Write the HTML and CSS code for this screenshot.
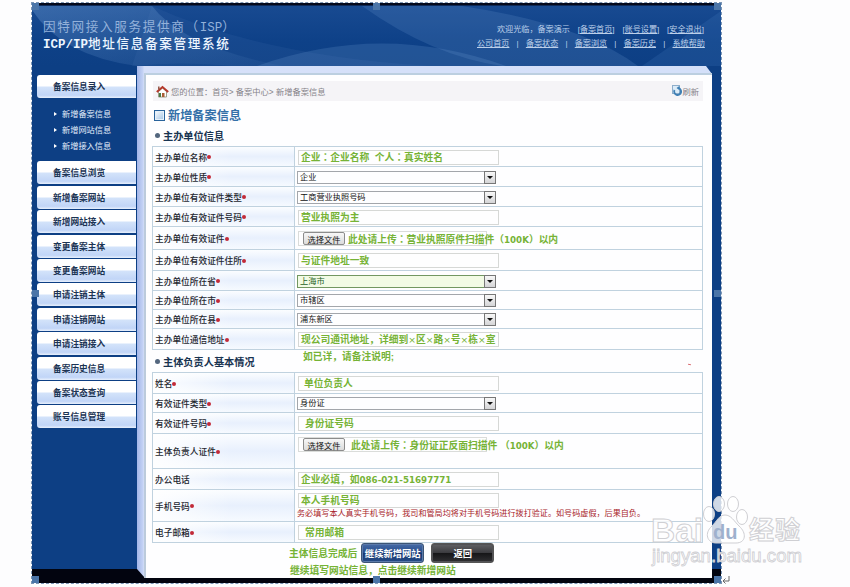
FILE: index.html
```html
<!DOCTYPE html>
<html lang="zh-CN">
<head>
<meta charset="utf-8">
<title>ICP/IP地址信息备案管理系统</title>
<link rel="stylesheet" href="styles.css">
</head>
<body>
<div class="app">
  <header class="header">
    <svg class="rays" width="689" height="60" viewBox="0 0 689 60" aria-hidden="true">
      <defs>
        <linearGradient id="ray" x1="0" y1="0" x2="1" y2="1"><stop offset="0" stop-color="#6d9bd2" stop-opacity=".38"/><stop offset="1" stop-color="#6d9bd2" stop-opacity=".06"/></linearGradient>
      </defs>
      <path d="M0 4Q30 50 105 60H250Q150 40 120 0H0Z" fill="url(#ray)"/>
      <path d="M120 0Q230 50 400 60H200Q150 55 100 60Z" fill="#5e8cc6" opacity=".1"/>
      <path d="M430 0Q550 18 606 60H470Q400 50 330 0Z" fill="#6e9bd2" opacity=".2"/>
      <path d="M225 60Q350 15 474 60Z" fill="#6e9bd2" opacity=".22"/>
      <path d="M689 5L610 60H689Z" fill="#4e86c6" opacity=".18"/>
    </svg>
    <div class="brand">
      <div class="brand-top">因特网接入服务提供商（<span>ISP</span>）</div>
      <div class="brand-main"><span>ICP/IP</span>地址信息备案管理系统</div>
    </div>
    <div class="account">
      <div class="links"><span>欢迎光临，备案演示</span><span>[<a>备案首页</a>]</span><span>[<a>账号设置</a>]</span><span>[<a>安全退出</a>]</span></div>
      <div class="links second"><a>公司首页</a><i>|</i><a>备案状态</a><i>|</i><a>备案浏览</a><i>|</i><a>备案历史</a><i>|</i><a>系统帮助</a></div>
    </div>
  </header>
  <div class="body">
    <nav class="side">
      <div class="item">备案信息录入</div>
      <ul class="sub"><li>新增备案信息</li><li>新增网站信息</li><li>新增接入信息</li></ul>
      <div class="items">
        <div class="item">备案信息浏览</div>
        <div class="item">新增备案网站</div>
        <div class="item">新增网站接入</div>
        <div class="item">变更备案主体</div>
        <div class="item">变更备案网站</div>
        <div class="item">申请注销主体</div>
        <div class="item">申请注销网站</div>
        <div class="item">申请注销接入</div>
        <div class="item">备案历史信息</div>
        <div class="item">备案状态查询</div>
        <div class="item">账号信息管理</div>
      </div>
    </nav>
    <div class="frame">
      <main class="panel">
        <div class="crumbs">
          <svg width="13" height="13" viewBox="0 0 13 13"><path d="M2.5 6.5V12h8V6.5L6.5 3Z" fill="#fff" stroke="#8b8a72" stroke-width=".8"/><path d="M.8 7L6.5 2L12.2 7" fill="none" stroke="#b33a2d" stroke-width="2"/><path d="M2.8 1.5v3" stroke="#8c4a38" stroke-width="1.4"/><path d="M3 8h2v4H3z" fill="#4a7a48"/><path d="M6 8h2.5v4H6z" fill="#a85c34"/></svg>
          <span>您的位置：首页&gt; 备案中心&gt; 新增备案信息</span>
          <div class="refresh"><svg width="11" height="12" viewBox="0 0 11 12"><rect x=".5" y=".5" width="7" height="8" fill="#dcecf8" stroke="#8eaecb"/><path d="M2.5 5A3.5 3.5 0 1 0 6 3M8.7 5.2A3.5 3.5 0 0 1 5 10" fill="none" stroke="#3f7fb4" stroke-width="1.8"/><path d="M4.5 3L7.3 1v4Z" fill="#3f7fb4"/></svg>刷新</div>
        </div>
        <h1><i></i>新增备案信息</h1>
        <h2>主办单位信息</h2>
        <div class="form">
          <div class="row h20"><label>主办单位名称<b></b></label><div class="cell"><div class="input">企业<s lang="zh-TW">：</s>企业名称&nbsp; 个人<s lang="zh-TW">：</s>真实姓名</div></div></div>
          <div class="row h20"><label>主办单位性质<b></b></label><div class="cell"><div class="select">企业</div></div></div>
          <div class="row h20"><label>主办单位有效证件类型<b></b></label><div class="cell"><div class="select">工商营业执照号码</div></div></div>
          <div class="row h20"><label>主办单位有效证件号码<b></b></label><div class="cell"><div class="input">营业执照为主</div></div></div>
          <div class="row h23"><label>主办单位有效证件<b></b></label><div class="cell"><div class="file"><button>选择文件</button><span>此处请上传<s lang="zh-TW">：</s>营业执照原件扫描件<s lang="zh-TW">（</s><em>100K</em><s lang="zh-TW">）</s>以内</span></div></div></div>
          <div class="row h21"><label>主办单位有效证件住所<b></b></label><div class="cell"><div class="input">与证件地址一致</div></div></div>
          <div class="row h20"><label>主办单位所在省<b></b></label><div class="cell"><div class="select active">上海市</div></div></div>
          <div class="row h19"><label>主办单位所在市<b></b></label><div class="cell"><div class="select">市辖区</div></div></div>
          <div class="row h19"><label>主办单位所在县<b></b></label><div class="cell"><div class="select">浦东新区</div></div></div>
          <div class="row h21"><label>主办单位通信地址<b></b></label><div class="cell"><div class="input">现公司通讯地址，详细到<u>×</u>区<u>×</u>路<u>×</u>号<u>×</u>栋<u>×</u>室</div></div></div>
        </div>
        <div class="between"><h2>主体负责人基本情况</h2><span>如已详，请备注说明;</span><i></i></div>
        <div class="form">
          <div class="row h21"><label>姓名<b></b></label><div class="cell"><div class="input in2">单位负责人</div></div></div>
          <div class="row h19"><label>有效证件类型<b></b></label><div class="cell"><div class="select">身份证</div></div></div>
          <div class="row h21"><label>有效证件号码<b></b></label><div class="cell"><div class="input in3">身份证号码</div></div></div>
          <div class="row h35"><label>主体负责人证件<b></b></label><div class="cell top"><div class="file gap"><button>选择文件</button><span>此处请上传<s lang="zh-TW">：</s>身份证正反面扫描件 <s lang="zh-TW">（</s><em>100K</em><s lang="zh-TW">）</s>以内</span></div></div></div>
          <div class="row h21"><label>办公电话</label><div class="cell"><div class="input">企业必填，如<em>086-021-51697771</em></div></div></div>
          <div class="row h32"><label>手机号码<b></b></label><div class="cell stack"><div class="input">本人手机号码</div><p>务必填写本人真实手机号码，我司和管局均将对手机号码进行拨打验证。如号码虚假，后果自负。</p></div></div>
          <div class="row h21"><label>电子邮箱<b></b></label><div class="cell"><div class="input in3">常用邮箱</div></div></div>
        </div>
        <div class="actions"><span>主体信息完成后</span><button class="go">继续新增网站</button><button class="back">返回</button></div>
        <div class="tip">继续填写网站信息，点击继续新增网站</div>
      </main>
    </div>
  </div>
  <div class="outline"></div>
  <i class="handle nw"></i><i class="handle n"></i><i class="handle ne"></i><i class="handle w"></i><i class="handle e"></i><i class="handle s"></i><i class="handle se"></i><i class="handle sw"></i>
</div>
<svg class="return" width="9" height="8" viewBox="0 0 9 8"><path d="M7 0v5H1M3.5 2.500L1 5l2.500 2.500" fill="none" stroke="#666"/></svg>
<svg class="watermark" width="200" height="90" viewBox="640 490 200 90">
  <g class="wm">
    <text x="651" y="542" font-size="34" textLength="52" lengthAdjust="spacingAndGlyphs">Bai</text>
    <ellipse cx="709" cy="514" rx="5.500" ry="7.500"/><ellipse cx="719" cy="504" rx="5.500" ry="7.500"/><ellipse cx="733" cy="504" rx="5.500" ry="7.500"/><ellipse cx="742" cy="517" rx="5.500" ry="7.500"/>
    <path d="M725 515C719 515 717 521 712 526C704 533 707 543 716 543H736C746 543 747 533 739 526C734 521 731 515 725 515Z"/>
    <text x="749" y="539" font-size="25" class="cn" textLength="51">经验</text>
    <text x="652" y="562" font-size="18" class="url" textLength="150" lengthAdjust="spacingAndGlyphs">jingyan.baidu.com</text>
  </g>
  <text x="713" y="539" class="du">du</text>
</svg>
</body>
</html>
```
FILE: styles.css
```css
* { box-sizing: border-box; }
body {
  margin: 0;
  width: 850px;
  height: 587px;
  overflow: hidden;
  position: relative;
  padding: 3px 0 0 32px;
  background: #fdfdfe;
  font-family: "Liberation Sans", "Noto Sans CJK SC", sans-serif;
  font-size: 9px;
  color: #222;
  white-space: nowrap;
}
i, em, u { font-style: normal; text-decoration: none; }
/* full-width punctuation centred in its cell */
s { text-decoration: none; font-family: "Noto Sans CJK TC", sans-serif; }
.app {
  position: relative;
  width: 689px;
  height: 580px;
  background: linear-gradient(#04091c 0 3px, #0d3f84 3px 566px, #02040f 566px);
}
.header {
  position: relative;
  height: 63px;
  padding-top: 3px;
  display: flex;
  justify-content: space-between;
  background: linear-gradient(#04091c 0 2px, #184a91 3px, #0e4188 60%, #0d3f84);
}
.rays { position: absolute; left: 0; top: 3px; }
.brand { position: relative; padding: 13px 0 0 11px; font-family: "Noto Sans CJK SC", sans-serif; display: flex; flex-direction: column; gap: 3px; }
.brand-top, .brand-main { height: 14px; line-height: 14px; font-size: 12.600px; letter-spacing: 1.650px; }
.brand-top { color: #93b1da; }
.brand-top span, .brand-main span { font: 12.500px/14px "Liberation Mono", monospace; letter-spacing: 0; }
.brand-main { font-weight: 500; color: #edf5ff; }
.brand-main span { font-weight: 700; }
.account { position: relative; width: 228px; margin-right: 16px; padding-top: 17px; color: #bdd0ea; font-size: 8.1px; line-height: 14px; }
.links { display: flex; justify-content: space-between; }
.links:first-child { padding-left: 20px; padding-right: 1px; }
.links a { text-decoration: underline; }
.second { height: 14px; }
.body { display: flex; height: 517px; }
.side { width: 105px; padding: 9px 1px 0 5px; }
.item {
  height: 23px;
  padding: 1px 0 0 16px;
  border-radius: 3px 0 0 3px;
  background: linear-gradient(#fff 0 48%, #d3e3fa 52%, #c1d5f7 88%, #e8f0fc);
  font-size: 8.7px;
  line-height: 23px;
  font-weight: 600;
  color: #1c3454;
}
.sub { margin: 9px 0 6.400px; padding: 0; list-style: none; font-size: 8.2px; line-height: 16px; color: #e4eefb; }
.sub li { display: flex; align-items: center; gap: 5px; padding-left: 17px; height: 16px; }
.sub li::before { content: ""; border: 2px solid transparent; border-left: 3px solid #fff; border-right: 0; margin-top: -3px; }
.items { display: flex; flex-direction: column; gap: 1.400px; }
.frame {
  width: 575px;
  height: 512px;
  padding: 7px 0 0 7px;
  background: linear-gradient(90deg, #a3b6e8, #c5d3f5 6px, #d6e0f9 7px, #d4e0f9);
  clip-path: polygon(0 0, 569px 0, 575px 8px, 575px 512px, 8px 512px, 0 503px);
}
.panel { height: 505px; border-top: 2px solid #bccfe0; border-left: 2px solid #bccbdc; background: #fefeff; padding: 6px 9px 0 7px; }
.crumbs { height: 20px; background: #f5f4f7; display: flex; align-items: center; padding: 0 4px 0 3px; color: #858389; font-size: 8.250px; }
.crumbs > svg { margin-right: 2px; }
.refresh { margin-left: auto; display: flex; align-items: center; }
h1, h2 { margin: 0; display: flex; align-items: center; }
h1 { height: 27px; padding: 1px 0 0 1px; gap: 3px; font-size: 12.200px; font-weight: 700; color: #3470a8; }
h1 i { width: 11px; height: 11px; border: 1px solid #29639b; background: linear-gradient(135deg, #fff, #9fc2e4); box-shadow: inset 0 0 0 1px #e5f0fa; }
h2 { height: 18px; padding: 0 0 3px 2px; gap: 3px; font-size: 10.200px; font-weight: 700; color: #193451; }
h2::before { content: ""; width: 5px; height: 5px; border-radius: 50%; background: #53667e; }
.form { width: 551px; margin-left: -1px; border: 1px solid #c0d2df; border-bottom: 0; }
.row { display: flex; border-bottom: 1px solid #c0d2df; }
.row:first-child { margin-top: -1px; border-top: 1px solid #c0d2df; }
.h19 { height: 19px; } .h20 { height: 20px; } .h21 { height: 21px; } .h23 { height: 23px; } .h32 { height: 32px; } .h35 { height: 35px; }
.row:first-child.h20 { height: 21px; }
.row:first-child.h21 { height: 22px; }
label {
  width: 142px;
  display: flex;
  align-items: center;
  padding: 1px 0 0 2px;
  border-right: 1px solid #c0d2df;
  background: linear-gradient(90deg, rgba(255,255,255,.9), rgba(255,255,255,0) 55%), linear-gradient(#fbfdff, #e8f0fd 50%, #f6faff);
  font-size: 8.7px;
  font-weight: 500;
  color: #24272f;
}
label b { width: 4px; height: 4px; border-radius: 50%; background: #c22a38; }
.cell { flex: 1; display: flex; align-items: center; padding: 1px 0 0 3px; color: #76b336; font-size: 9.750px; font-weight: 700; }
.input { width: 201px; height: 15px; border: 1px solid #d6d8d6; padding-left: 2px; line-height: 13px; }
.in2 { padding-left: 5px; }
.in3 { padding-left: 6px; }
.select {
  position: relative;
  width: 199px;
  height: 13px;
  margin-left: -1px;
  border: 1px solid #a3a6ab;
  padding-left: 2px;
  font-size: 8.200px;
  line-height: 11px;
  font-weight: 400;
  color: #111;
}
.select::before { content: ""; position: absolute; right: -1px; top: -1px; width: 12px; height: 13px; box-sizing: border-box; border: 1px solid #777; background: linear-gradient(#f8f8f8, #d5d5d7); }
.select::after { content: ""; position: absolute; right: 2px; top: 4px; border: 3px solid transparent; border-top-color: #111; border-bottom: 0; }
.active { background: #f2fbe5; border-color: #729761; color: #256127; }
em { font: 700 8.700px "DejaVu Sans", sans-serif; }
u { font: 9.200px "DejaVu Sans", sans-serif; }
.file { width: 189px; height: 15px; border: 1px solid #dadcda; display: flex; align-items: center; gap: 3px; padding-left: 4px; }
.file.gap { gap: 6px; }
.file button { flex: none; width: 42px; height: 13px; padding: 0; border: 1px solid #8c8c8c; border-radius: 2px; background: linear-gradient(#f7f7f7, #dcdcdc); font: 8.200px/10px "Noto Sans CJK SC", sans-serif; color: #111; }
.cell.top { align-items: flex-start; padding-top: 3px; }
.between { display: flex; height: 22px; }
.between h2 { width: 150px; height: 22px; padding-bottom: 0; }
.between > span { color: #76b336; font-size: 9.750px; font-weight: 700; line-height: 13px; }
.between > i { width: 3px; height: 1px; margin: 14px 0 0 294px; background: #d04a50; transform: rotate(15deg); }
.stack { flex-direction: column; align-items: flex-start; padding-top: 3px; }
.stack p { margin: -1px 0 0 -1px; font-size: 8.100px; line-height: 13px; font-weight: 400; color: #a82329; }
.actions { display: flex; align-items: center; height: 20px; padding-left: 136px; color: #76b336; font-size: 9.750px; font-weight: 700; }
.actions button { width: 63px; height: 20px; padding: 0; border-radius: 3px; color: #fff; font: 700 9.300px "Noto Sans CJK SC", sans-serif; }
.go { margin: 0 7px 0 4px; border: 1px solid #3c5475; background: linear-gradient(#466ba8, #254a87 50%, #17376f 52%, #264c87); box-shadow: inset 0 0 0 1px #5b7aab; }
.actions .back { border: 1px solid #555; background: linear-gradient(#626266, #3c3c40 48%, #161618 52%, #303033); box-shadow: inset 0 0 0 1px #525256; }
.tip { padding-left: 137px; color: #76b336; font-size: 9.750px; font-weight: 700; line-height: 15px; }
.outline { position: absolute; inset: -1px; border: 1px dashed #7c96b5; pointer-events: none; }
.handle { position: absolute; width: 7px; height: 7px; background: #4b75a8; }
.nw { left: 0; top: 0; } .n { left: 341px; top: 0; } .ne { right: 0; top: 0; }
.w { left: 0; top: 287px; } .e { right: 0; top: 287px; }
.sw { left: 0; bottom: 0; } .s { left: 341px; bottom: 0; } .se { right: 0; bottom: 0; }
.return { position: absolute; left: 722px; top: 576px; }
.watermark { position: absolute; left: 640px; top: 490px; }
.wm { fill: #fff; fill-opacity: .8; stroke: #cfcfd3; stroke-width: 1; font-family: "Liberation Sans", sans-serif; font-weight: 700; }
.cn { font-family: "Noto Sans CJK SC", sans-serif; }
.url { font-weight: 400; stroke-width: .8; }
.du { font: 700 20px "Liberation Sans", sans-serif; fill: #9fb1cd; }
```
